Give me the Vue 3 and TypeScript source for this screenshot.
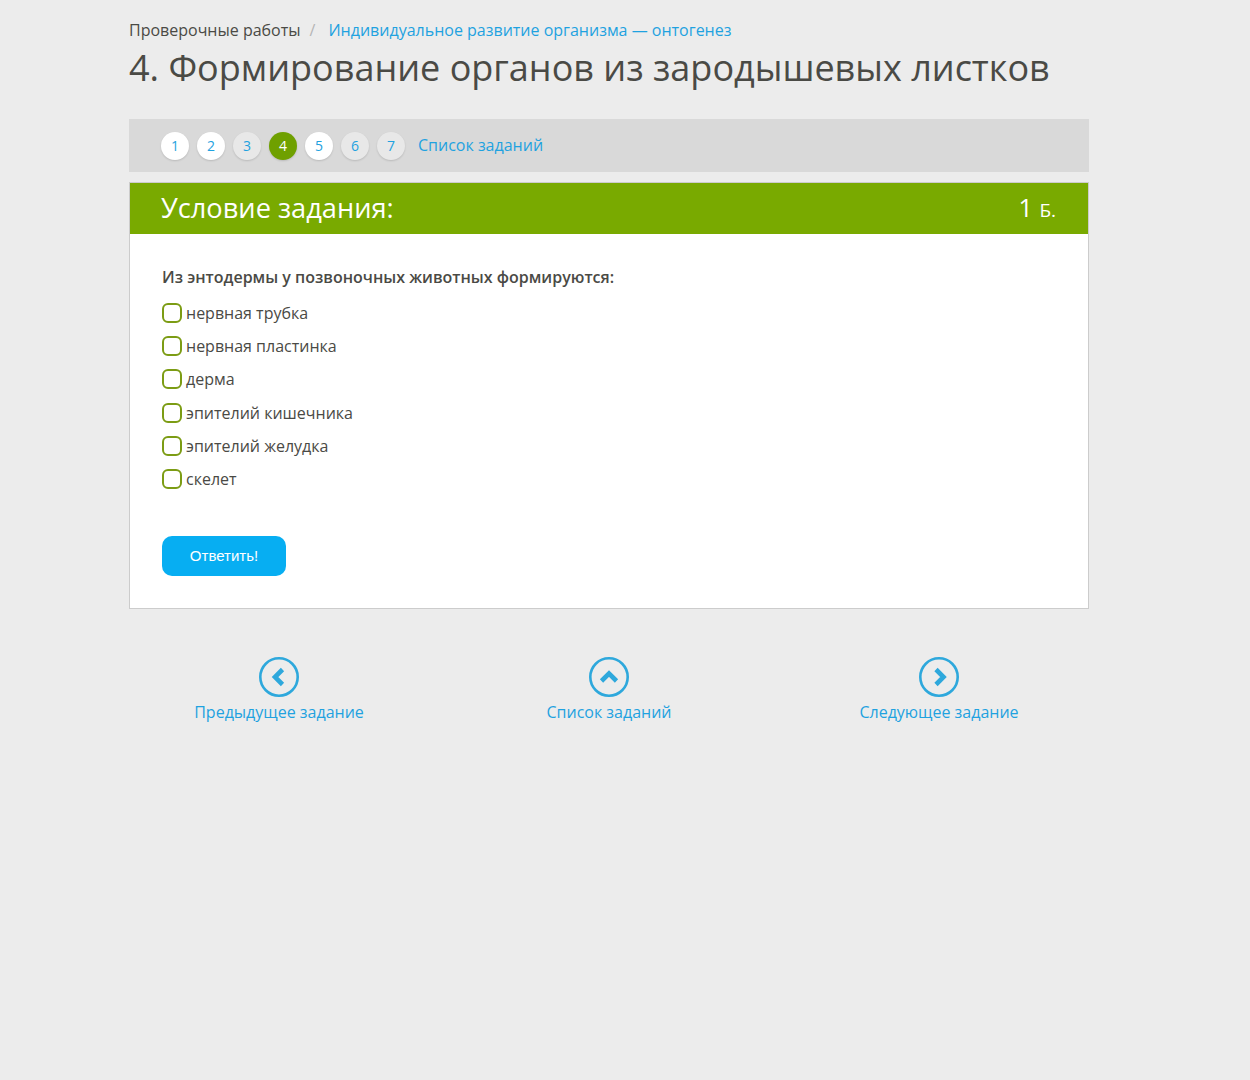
<script setup lang="ts">
interface Task {
  label: string;
  state: "done" | "seen" | "current";
}

const tasks: Task[] = [
  { label: "1", state: "done" },
  { label: "2", state: "done" },
  { label: "3", state: "seen" },
  { label: "4", state: "current" },
  { label: "5", state: "done" },
  { label: "6", state: "seen" },
  { label: "7", state: "seen" },
];

const answers = [
  "нервная трубка",
  "нервная пластинка",
  "дерма",
  "эпителий кишечника",
  "эпителий желудка",
  "скелет",
];

const navLinks = [
  { label: "Предыдущее задание", chevron: "M23.5 12.5 L16 20 L23.5 27.5" },
  { label: "Список заданий", chevron: "M12.5 24 L20 16.5 L27.5 24" },
  { label: "Следующее задание", chevron: "M17 12.5 L24.5 20 L17 27.5" },
];
</script>

<template>
  <div class="page">
    <nav class="crumbs">
      <span>Проверочные работы</span>
      <span class="sep">/</span>
      <a href="#">Индивидуальное развитие организма — онтогенез</a>
    </nav>
    <h1>4. Формирование органов из зародышевых листков</h1>

    <div class="tasks">
      <a v-for="task in tasks" :key="task.label" href="#" class="dot" :class="task.state">{{ task.label }}</a>
      <a href="#" class="task-list">Список заданий</a>
    </div>

    <section class="card">
      <header class="card-head">
        <span class="card-title">Условие задания:</span>
        <span class="points">1 <small>Б.</small></span>
      </header>
      <div class="card-body">
        <p class="question">Из энтодермы у позвоночных животных формируются:</p>
        <label v-for="answer in answers" :key="answer" class="answer">
          <span class="box"></span>
          <span>{{ answer }}</span>
        </label>
        <button type="button" class="submit">Ответить!</button>
      </div>
    </section>

    <div class="bottom-nav">
      <a v-for="link in navLinks" :key="link.label" href="#" class="nav-link">
        <svg width="40" height="40" viewBox="0 0 40 40" fill="none">
          <circle cx="20" cy="20" r="18.7" stroke="#2ea8dc" stroke-width="2.6" />
          <path :d="link.chevron" stroke="#2ea8dc" stroke-width="4.6" />
        </svg>
        <span>{{ link.label }}</span>
      </a>
    </div>
  </div>
</template>

<style>
html,
body {
  background: #ececec;
}
</style>

<style scoped>
.page {
  box-sizing: border-box;
  width: 960px;
  min-height: 1080px;
  margin-left: 129px;
  padding-top: 18px;
  font-family: "Open Sans", sans-serif;
  font-size: 16px;
  color: #4a4a45;
}

a {
  color: #1fa2e0;
  text-decoration: none;
}

.crumbs {
  display: flex;
  height: 24px;
  line-height: 24px;
}

.sep {
  margin: 0 12px 0 9px;
  padding-right: 1px;
  color: #b5b5b5;
}

h1 {
  margin: 0;
  padding-top: 2px;
  font-size: 36px;
  font-weight: 400;
  line-height: 48px;
  color: #4a4a45;
}

.tasks {
  display: flex;
  align-items: center;
  gap: 8px;
  box-sizing: border-box;
  height: 53px;
  margin-top: 27px;
  padding-left: 32px;
  background: #d9d9d9;
}

.dot {
  display: flex;
  align-items: center;
  justify-content: center;
  width: 28px;
  height: 28px;
  border-radius: 50%;
  font-size: 14px;
  box-shadow: 0 1px 2px rgba(0, 0, 0, 0.14);
}

.dot.done {
  background: #fff;
}

.dot.seen {
  background: #e8e8e8;
}

.dot.current {
  background: #6fa000;
  color: #fff;
}

.task-list {
  margin-left: 5px;
  padding-bottom: 2px;
}

.card {
  margin-top: 10px;
  border: 1px solid #ccc;
  background: #fff;
}

.card-head {
  display: flex;
  align-items: center;
  justify-content: space-between;
  box-sizing: border-box;
  height: 51px;
  padding: 0 32px 3px 31px;
  background: #79aa00;
  color: #fff;
}

.card-title {
  font-size: 27.2px;
}

.points {
  font-size: 25px;
}

.points small {
  font-size: 19px;
}

.card-body {
  padding: 32px;
}

.question {
  margin: 0 0 8.4px;
  font-weight: 600;
  line-height: 22px;
}

.answer {
  display: flex;
  align-items: center;
  gap: 4px;
  height: 33.2px;
}

.box {
  box-sizing: border-box;
  width: 20px;
  height: 20px;
  border: 2px solid #7c9c14;
  border-radius: 6px;
}

.submit {
  display: block;
  width: 124px;
  height: 40px;
  margin-top: 40.6px;
  padding-bottom: 2px;
  border: none;
  border-radius: 10px;
  background: #07aef2;
  color: #fff;
  font-family: "Liberation Sans", sans-serif;
  font-size: 15px;
}

.bottom-nav {
  display: grid;
  grid-template-columns: repeat(3, 330px);
  margin: 48px -15px 0;
}

.nav-link {
  display: flex;
  flex-direction: column;
  align-items: center;
  gap: 3px;
  line-height: 24px;
}
</style>
